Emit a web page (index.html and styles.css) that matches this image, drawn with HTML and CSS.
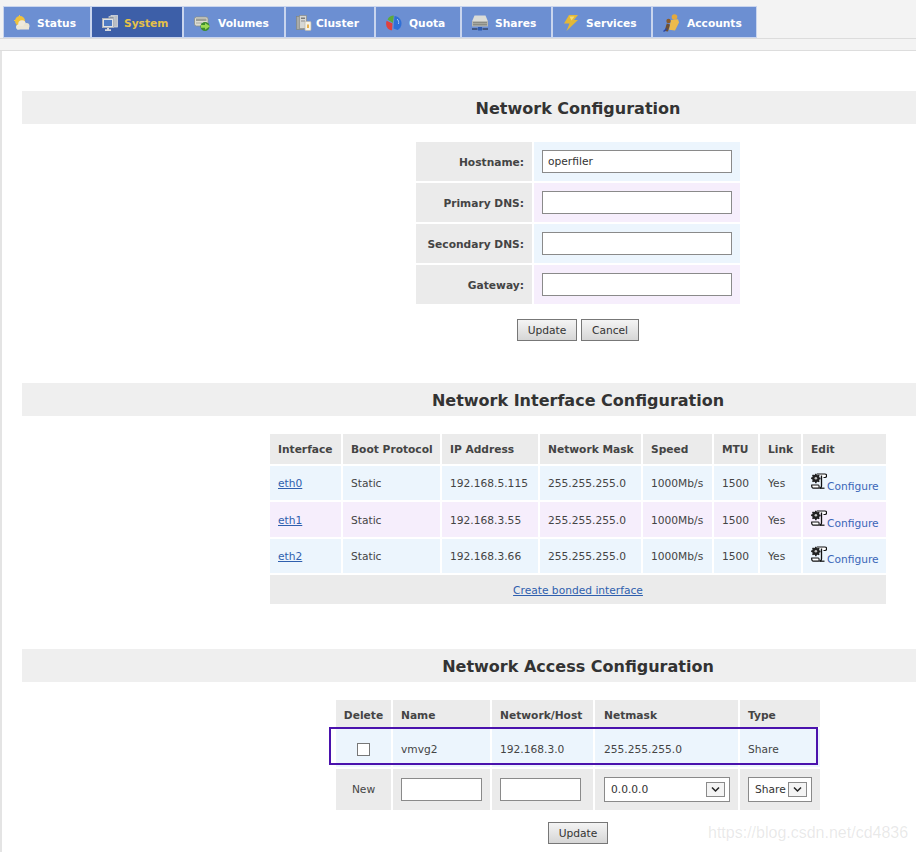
FILE: index.html
```html
<!DOCTYPE html>
<html lang="en">
<head>
<meta charset="utf-8">
<title>Network Configuration</title>
<link rel="stylesheet" href="styles.css">
</head>
<body>
<svg class="defs" width="0" height="0" aria-hidden="true">
  <symbol id="cfg" viewBox="0 0 16 16">
    <path d="M6 1h7.800c1.200 0 1.800.8 1.800 1.800s-.6 1.700-1.500 1.700h-1.600" fill="#fff" stroke="#111" stroke-width="1.200"/>
    <path d="M10.500 2.500v10.300c0 1.300-.8 2.400-2 2.400" fill="none" stroke="#111" stroke-width="1.300"/>
    <path d="M.8 12h6.600c.8 0 .9 3.200.2 3.200H2.400C1.200 15.200.4 13.600.8 12z" fill="#fff" stroke="#111" stroke-width="1.200"/>
    <path d="M8.500 15.200h5" stroke="#111" stroke-width="1.200"/>
    <g transform="translate(.6 .7) scale(.85)">
      <path d="M4.200 0h1.600l.3 1.300 1.100.5 1.200-.7 1.100 1.100-.7 1.200.5 1.100 1.300.3v1.600l-1.300.3-.5 1.100.7 1.200-1.100 1.100-1.200-.7-1.100.5-.3 1.300H4.200l-.3-1.300-1.100-.5-1.200.7L.5 8.800l.7-1.200-.5-1.100-1.300-.3V4.600l1.300-.3.5-1.100-.7-1.200L1.600.9l1.200.7 1.100-.5z" fill="#222"/>
      <circle cx="5" cy="5.400" r="1.500" fill="#c4c4c4"/>
    </g>
  </symbol>
</svg>

<header class="topbar">
  <nav class="tabs">
    <a class="tab tab-status" href="#"><svg class="ico" viewBox="0 0 16 16"><circle cx="6" cy="6" r="5" fill="#f0c23c"/><path d="M5.500 0v1.500M0 5.500h1.500" stroke="#efc646"/><circle cx="8" cy="9" r="3.800" fill="#efeadb"/><circle cx="12.500" cy="11" r="3" fill="#e9e4d2"/><circle cx="4.500" cy="12" r="2.500" fill="#efeadb"/><rect x="3" y="11" width="12" height="3.500" fill="#ebe6d6"/></svg>Status</a>
    <a class="tab tab-system active" href="#"><svg class="ico" viewBox="0 0 16 16"><rect x="9" y=".5" width="6.500" height="11.500" fill="#b9bec4" stroke="#d6d9dd" stroke-width=".8"/><rect x="7" y="1.500" width="5" height="3" fill="#8f97a3" stroke="#d6d9dd" stroke-width=".6"/><rect x=".5" y="3.500" width="11" height="9" fill="#dfe2e6" stroke="#aeb3ba"/><rect x="2" y="5" width="8" height="6" fill="#4f7cc4"/><path d="M5 13h2v1.300h2V16H3v-1.700h2z" fill="#d6d9dd"/></svg>System</a>
    <a class="tab tab-volumes" href="#"><svg class="ico" viewBox="0 0 16 16"><rect x=".5" y="2" width="13.500" height="9" rx="2" fill="#dcdcd2" stroke="#8c8f86" stroke-width=".8"/><rect x="2" y="3.500" width="10.500" height="2.500" fill="#9b9e96"/><path d="M2 8h6" stroke="#a8aba3"/><circle cx="11" cy="11.500" r="4.500" fill="#3d8c2e"/><path d="M7 10h4V8l5 3.300-5 3.400v-2H7z" fill="#9ddb53"/></svg>Volumes</a>
    <a class="tab tab-cluster" href="#"><svg class="ico" viewBox="0 0 16 16"><rect x=".5" y="1.500" width="7" height="13" fill="#a9aba9" stroke="#83867f" stroke-width=".7"/><rect x="3.500" y=".5" width="7" height="13" fill="#d6d7d4" stroke="#8a8c88" stroke-width=".7"/><rect x="5" y="2.500" width="4" height="1.500" fill="#7b7b7b"/><rect x="5" y="5.500" width="4" height="1" fill="#8e8e8e"/><rect x="9" y="6.500" width="6" height="9" rx="1" fill="#f5f2e8" stroke="#bdb8a8" stroke-width=".7"/><rect x="11" y="9.500" width="2" height="3.500" fill="#e7b04d"/></svg>Cluster</a>
    <a class="tab tab-quota" href="#"><svg class="ico" viewBox="0 0 16 16"><path d="M7 8L1.500 4.500C2.800 2 5 .5 7.800.5z" fill="#5cab3a"/><path d="M6.500 8.500L.6 5.800C-.4 8.600.2 11.500 1.800 13.500c1.200 1 2.600 1.800 4.200 1.800z" fill="#e0413f"/><path d="M8.500 1c4 .3 7 3.600 7 7.500 0 2.800-1.500 5.300-3.800 6.500L7.500 13.500z" fill="#2f6fd6"/><path d="M11 4c1.500 1.200 2 3 1.500 5" stroke="#a6c8f4" fill="none"/></svg>Quota</a>
    <a class="tab tab-shares" href="#"><svg class="ico" viewBox="0 0 16 16"><path d="M2.500 .5h11L16 6.500H0z" fill="#dbdcd7"/><rect y="6" width="16" height="5.500" fill="#b8b9b3"/><path d="M1 7.800h14M1 9.800h14" stroke="#777972"/><path d="M0 14h5.500M10.500 14H16" stroke="#35476b" stroke-width="1.400"/><rect x="6" y="12" width="4" height="3.500" fill="#2d5bb0"/></svg>Shares</a>
    <a class="tab tab-services" href="#"><svg class="ico" viewBox="0 0 16 16"><path d="M6 0h9l-4 5h4L3.500 16 6.500 8.500H1z" fill="#e3b838"/><path d="M6.500 1.500h5L8.500 5.500" fill="#f4dc75"/></svg>Services</a>
    <a class="tab tab-accounts" href="#"><svg class="ico ico-tall" viewBox="0 0 16 18"><circle cx="11.500" cy="3" r="2.800" fill="#e3a93e"/><path d="M8 6l7-.8 1 3.300L12 16.500l-6-.8z" fill="#edbb4c"/><circle cx="5.500" cy="7" r="2.200" fill="#8a5a2a"/><path d="M1.500 17l2.300-7.500 3.200 1L5 17.500z" fill="#70502f"/><path d="M.5 17.500l3.500-3" stroke="#2746a8" stroke-width="1.400"/></svg>Accounts</a>
  </nav>
</header>

<main class="panel">
  <section class="block block-host">
    <h2 class="title">Network Configuration</h2>
    <table class="grid grid-host">
      <tbody>
        <tr class="odd"><th class="label">Hostname:</th><td><input class="field field-wide" type="text" value="operfiler"></td></tr>
        <tr class="even"><th class="label">Primary DNS:</th><td><input class="field field-wide" type="text"></td></tr>
        <tr class="odd"><th class="label">Secondary DNS:</th><td><input class="field field-wide" type="text"></td></tr>
        <tr class="even"><th class="label">Gateway:</th><td><input class="field field-wide" type="text"></td></tr>
      </tbody>
    </table>
    <div class="actions actions-host">
      <button class="btn btn-update" type="button">Update</button>
      <button class="btn btn-cancel" type="button">Cancel</button>
    </div>
  </section>

  <section class="block block-iface">
    <h2 class="title">Network Interface Configuration</h2>
    <table class="grid grid-iface">
      <colgroup><col class="c71"><col class="c97"><col class="c96"><col class="c101"><col class="c69"><col class="c44"><col class="c41"><col class="c83"></colgroup>
      <thead>
        <tr class="head"><th>Interface</th><th>Boot Protocol</th><th>IP Address</th><th>Network Mask</th><th>Speed</th><th>MTU</th><th>Link</th><th>Edit</th></tr>
      </thead>
      <tbody>
        <tr class="odd r1"><td><a class="link" href="#">eth0</a></td><td>Static</td><td>192.168.5.115</td><td>255.255.255.0</td><td>1000Mb/s</td><td>1500</td><td>Yes</td><td class="edit"><a class="cfg" href="#"><svg class="cfg-ico"><use href="#cfg"/></svg>Configure</a></td></tr>
        <tr class="even r2"><td><a class="link" href="#">eth1</a></td><td>Static</td><td>192.168.3.55</td><td>255.255.255.0</td><td>1000Mb/s</td><td>1500</td><td>Yes</td><td class="edit"><a class="cfg" href="#"><svg class="cfg-ico"><use href="#cfg"/></svg>Configure</a></td></tr>
        <tr class="odd r1"><td><a class="link" href="#">eth2</a></td><td>Static</td><td>192.168.3.66</td><td>255.255.255.0</td><td>1000Mb/s</td><td>1500</td><td>Yes</td><td class="edit"><a class="cfg" href="#"><svg class="cfg-ico"><use href="#cfg"/></svg>Configure</a></td></tr>
        <tr class="foot"><td colspan="8"><a class="link" href="#">Create bonded interface</a></td></tr>
      </tbody>
    </table>
  </section>

  <section class="block block-access">
    <h2 class="title">Network Access Configuration</h2>
    <div class="access-wrap">
      <table class="grid grid-access">
        <colgroup><col class="c55"><col class="c97"><col class="c101"><col class="c143"><col class="c80"></colgroup>
        <thead>
          <tr class="head"><th class="center">Delete</th><th>Name</th><th>Network/Host</th><th>Netmask</th><th>Type</th></tr>
        </thead>
        <tbody>
          <tr class="odd r-data"><td class="center"><input class="check" type="checkbox"></td><td>vmvg2</td><td>192.168.3.0</td><td>255.255.255.0</td><td>Share</td></tr>
          <tr class="new"><td class="center">New</td><td><input class="field field-small" type="text"></td><td><input class="field field-small" type="text"></td>
            <td><span class="pick pick-mask"><select class="sel"><option>0.0.0.0</option></select><svg class="arrow" viewBox="0 0 19 15"><rect x=".5" y=".5" width="18" height="14" fill="#f4f4f4" stroke="#8a8a8a"/><path d="M6 5.500l3.500 3.500 3.500-3.500" fill="none" stroke="#222" stroke-width="1.500"/></svg></span></td>
            <td><span class="pick pick-type"><select class="sel"><option>Share</option></select><svg class="arrow" viewBox="0 0 19 15"><rect x=".5" y=".5" width="18" height="14" fill="#f4f4f4" stroke="#8a8a8a"/><path d="M6 5.500l3.500 3.500 3.500-3.500" fill="none" stroke="#222" stroke-width="1.500"/></svg></span></td>
          </tr>
        </tbody>
      </table>
      <div class="highlight"></div>
    </div>
    <div class="actions actions-access">
      <button class="btn btn-update" type="button">Update</button>
    </div>
  </section>
</main>
<div class="watermark">https://blog.csdn.net/cd4836</div>
</body>
</html>
```

FILE: styles.css
```css
html, body {
  margin: 0;
  padding: 0;
  height: 852px;
  overflow: hidden;
  background: #fff;
}

body {
  position: relative;
  font-family: "DejaVu Sans", Verdana, sans-serif;
  font-size: 10.67px;
  color: #444;
}

.defs {
  position: absolute;
}

.topbar {
  box-sizing: border-box;
  height: 51px;
  padding-top: 6px;
  background: #f3f3f3;
  border-bottom: 1px solid #ddd;
}

.tabs {
  display: flex;
  padding-left: 3px;
  border-bottom: 1px solid #dcdcdc;
}

.tab {
  box-sizing: border-box;
  display: flex;
  align-items: center;
  height: 32px;
  padding: 2px 0 0 10px;
  border: 1px solid #c9d5ee;
  background: #6c8fd2;
  color: #fff;
  font-weight: bold;
  text-decoration: none;
}

.tab.active {
  background: #3d5fa8;
  color: #e6c148;
}

.ico {
  width: 16px;
  height: 16px;
  flex: none;
}

.ico-tall {
  height: 18px;
}

.tab-status { width: 88px; gap: 7px; }
.tab-system { width: 92px; gap: 6px; }
.tab-volumes { width: 102px; gap: 8px; }
.tab-cluster { width: 90px; gap: 4px; }
.tab-quota { width: 86px; gap: 7px; }
.tab-shares { width: 91px; gap: 7px; }
.tab-services { width: 100px; gap: 7px; }
.tab-accounts { width: 105px; gap: 8px; }

.panel {
  height: 801px;
  box-sizing: border-box;
  padding: 40px 0 0 20px;
  border-left: 2px solid #e4e4e4;
}

.block {
  width: 1112px;
}

.block-host { margin-bottom: 42px; }
.block-iface { margin-bottom: 43px; }

.title {
  margin: 0 0 16px;
  height: 33px;
  background: #efefef;
  color: #333;
  font-size: 16px;
  line-height: 35px;
  font-weight: bold;
  text-align: center;
}

.grid {
  margin: 0 auto;
  border-collapse: separate;
  border-spacing: 2px;
  table-layout: fixed;
  font-size: 10.67px;
}

.grid th,
.grid td {
  padding: 0 0 0 8px;
  text-align: left;
  vertical-align: middle;
  white-space: nowrap;
  overflow: hidden;
}

.grid th {
  background: #ebebeb;
  color: #444;
  font-weight: bold;
}

.odd td { background: #ecf5fd; }
.even td { background: #f6eefc; }

.grid-host { width: 328px; }
.grid-host tr { height: 39px; }
.grid-host .label {
  width: 108px;
  padding: 2px 8px 0 0;
  text-align: right;
}

.field {
  box-sizing: border-box;
  display: block;
  padding: 0 5px;
  border: 1px solid #8a8a8a;
  border-radius: 0;
  background: #fff;
  color: #333;
  font: 10.67px "DejaVu Sans", Verdana, sans-serif;
  outline: none;
}

.field-wide { width: 190px; height: 23px; }
.field-small { width: 81px; height: 23px; }

.actions {
  display: flex;
  justify-content: center;
  gap: 4px;
}

.actions-host { margin-top: 13px; }
.actions-access { margin-top: 10px; }

.btn {
  box-sizing: border-box;
  height: 22px;
  padding: 0;
  border: 1px solid #777;
  border-radius: 0;
  background: linear-gradient(#f4f4f4, #d6d6d6);
  color: #333;
  font: 10.67px "DejaVu Sans", Verdana, sans-serif;
}

.btn-update { width: 60px; }
.btn-cancel { width: 58px; }

.grid-iface { width: 620px; }
.c71 { width: 71px; }
.c97 { width: 97px; }
.c96 { width: 96px; }
.c101 { width: 101px; }
.c69 { width: 69px; }
.c44 { width: 44px; }
.c41 { width: 41px; }
.c83 { width: 83px; }

.head { height: 30px; }
.r1 { height: 34px; }
.r2 { height: 35px; }
.foot { height: 29px; }

.grid .r2 td { padding-top: 2px; }

.grid .foot td {
  padding: 2px 0 0;
  background: #ebebeb;
  text-align: center;
}

.link {
  color: #2f5fae;
  text-decoration: underline;
}

.cfg {
  color: #3a66b8;
  text-decoration: none;
}

.cfg-ico {
  width: 16px;
  height: 16px;
  vertical-align: 1px;
}

.edit {
  line-height: 16px;
}

.grid .r1 .edit { padding-top: 2px; }

.access-wrap {
  position: relative;
}

.grid-access { width: 488px; }
.grid-access .head { height: 27px; }
.grid-access .head th { padding-top: 3px; }
.grid-access th:nth-child(4),
.grid-access td:nth-child(4) { padding-left: 9px; }
.c55 { width: 55px; }
.c143 { width: 143px; }
.c80 { width: 80px; }

.grid-access .head th.center,
.grid-access .center {
  padding-left: 0;
  padding-right: 0;
  text-align: center;
}

.r-data { height: 38px; }
.grid .r-data td { padding-top: 2px; }
.new { height: 41px; }
.new td { background: #ebebeb; }

.check {
  appearance: none;
  box-sizing: border-box;
  display: block;
  width: 13px;
  height: 13px;
  margin: 0 auto;
  border: 1px solid #777;
  background: #fff;
}

.pick {
  position: relative;
  display: block;
}

.pick-mask { width: 126px; }
.pick-type { width: 64px; }

.sel {
  appearance: none;
  box-sizing: border-box;
  display: block;
  width: 100%;
  height: 25px;
  padding: 0 0 0 6px;
  border: 1px solid #8a8a8a;
  border-radius: 0;
  background: #fff;
  color: #333;
  font: 10.67px "DejaVu Sans", Verdana, sans-serif;
}

.arrow {
  position: absolute;
  top: 5px;
  right: 5px;
  width: 19px;
  height: 15px;
}

.highlight {
  position: absolute;
  left: 307px;
  top: 29px;
  width: 489px;
  height: 38px;
  box-sizing: border-box;
  border: 2px solid #4a12ad;
}

.watermark {
  position: absolute;
  left: 708px;
  top: 824px;
  font-family: "Liberation Sans", Arial, sans-serif;
  font-size: 16px;
  line-height: 18px;
  color: rgba(120, 120, 120, 0.17);
  white-space: nowrap;
}
```
